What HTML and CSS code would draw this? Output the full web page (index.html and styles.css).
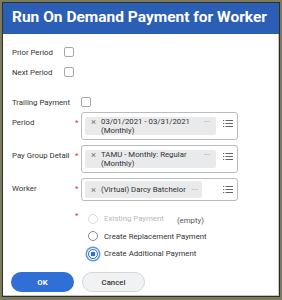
FILE: index.html
```html
<!DOCTYPE html>
<html>
<head>
    <link rel="stylesheet" href="styles.css">
</head>
<body>
    <div class="window">
        <div class="title">Run On Demand Payment for Worker</div>
        <div class="content">
            <div class="row short">
                <label>Prior Period</label>
                <span class="checkbox"></span>
            </div>
            <div class="row short">
                <label>Next Period</label>
                <span class="checkbox"></span>
            </div>
            <div class="row check">
                <label>Trailing Payment</label>
                <span></span>
                <span class="checkbox"></span>
            </div>

            <div class="row field first">
                <label>Period</label>
                <span class="req">*</span>
                <div class="box">
                    <div class="chip">
                        <span class="x">&times;</span>
                        <span class="text">03/01/2021 - 03/31/2021 (Monthly)</span>
                        <span class="dots">&middot;&middot;&middot;</span>
                    </div>
                    <svg class="list-icon" width="10" height="7" viewBox="0 0 10 7">
                        <rect x="0" y="0" width="1.2" height="1" />
                        <rect x="2.5" y="0" width="7.5" height="1" />
                        <rect x="0" y="3" width="1.2" height="1" />
                        <rect x="2.5" y="3" width="7.5" height="1" />
                        <rect x="0" y="6" width="1.2" height="1" />
                        <rect x="2.5" y="6" width="7.5" height="1" />
                    </svg>
                </div>
            </div>
            <div class="row field">
                <label>Pay Group Detail</label>
                <span class="req">*</span>
                <div class="box">
                    <div class="chip">
                        <span class="x">&times;</span>
                        <span class="text">TAMU - Monthly: Regular (Monthly)</span>
                        <span class="dots">&middot;&middot;&middot;</span>
                    </div>
                    <svg class="list-icon" width="10" height="7" viewBox="0 0 10 7">
                        <rect x="0" y="0" width="1.2" height="1" />
                        <rect x="2.5" y="0" width="7.5" height="1" />
                        <rect x="0" y="3" width="1.2" height="1" />
                        <rect x="2.5" y="3" width="7.5" height="1" />
                        <rect x="0" y="6" width="1.2" height="1" />
                        <rect x="2.5" y="6" width="7.5" height="1" />
                    </svg>
                </div>
            </div>
            <div class="row field">
                <label>Worker</label>
                <span class="req">*</span>
                <div class="box single">
                    <div class="chip">
                        <span class="x">&times;</span>
                        <span class="text">(Virtual) Darcy Batchelor</span>
                        <span class="dots">&middot;&middot;&middot;</span>
                    </div>
                    <svg class="list-icon" width="10" height="7" viewBox="0 0 10 7">
                        <rect x="0" y="0" width="1.2" height="1" />
                        <rect x="2.5" y="0" width="7.5" height="1" />
                        <rect x="0" y="3" width="1.2" height="1" />
                        <rect x="2.5" y="3" width="7.5" height="1" />
                        <rect x="0" y="6" width="1.2" height="1" />
                        <rect x="2.5" y="6" width="7.5" height="1" />
                    </svg>
                </div>
            </div>

            <div class="row radios">
                <span></span>
                <span class="req">*</span>
                <div class="radio-list">
                    <div class="radio-item disabled">
                        <span class="radio"></span>
                        <span>Existing Payment</span>
                        <span class="empty">(empty)</span>
                    </div>
                    <div class="radio-item">
                        <span class="radio"></span>
                        <span>Create Replacement Payment</span>
                    </div>
                    <div class="radio-item">
                        <span class="radio selected"></span>
                        <span>Create Additional Payment</span>
                    </div>
                </div>
            </div>

            <div class="actions">
                <button class="btn-ok">OK</button>
                <button class="btn-cancel">Cancel</button>
            </div>
        </div>
    </div>
</body>
</html>
```

FILE: styles.css
```css
body {
    margin: 0;
    padding: 2px 2px 3px 2px;
    background-color: #7c7c5c;
    font-family: Roboto, "Liberation Sans", sans-serif;
}

.window {
    box-sizing: border-box;
    height: 295px;
    background-color: #fff;
    border: 1px solid #2e2e2e;
    box-shadow: inset -1px -1px 0 #c4c4c4;
}

.title {
    background-color: #2b5eb5;
    color: #fff;
    font-size: 15.5px;
    font-weight: bold;
    line-height: 20px;
    padding: 4px 9px 7px 9px;
    white-space: nowrap;
}

.content {
    padding: 8px 0 0 9px;
    font-size: 7.8px;
    color: #333;
}

.row {
    display: grid;
    grid-template-columns: 61px 8px 157px;
}

.row label {
    line-height: 9px;
}

.row.short {
    grid-template-columns: 52px 10px;
    height: 20px;
    align-items: center;
}

.row.check {
    margin-top: 11px;
    height: 18px;
    align-items: center;
}

.checkbox {
    display: block;
    box-sizing: border-box;
    width: 10px;
    height: 10px;
    border: 1px solid #a8a8a8;
    border-radius: 2px;
}

.req {
    color: #d6322d;
    font-size: 8px;
    line-height: 9px;
    padding-left: 2px;
}

.row.field {
    margin-top: 5px;
}

.row.field.first {
    margin-top: 1px;
}

.row.field label,
.row.field .req {
    padding-top: 6px;
}

.box {
    display: flex;
    align-items: flex-start;
    border: 1px solid #bcbcbc;
    border-radius: 3px;
    padding: 4px 4px 4px 3px;
}

.box.single {
    align-items: center;
    padding: 2px 4px 2px 3px;
}

.chip {
    flex: 1;
    display: flex;
    align-items: flex-start;
    background-color: #e9eaec;
    border-radius: 2px;
    padding: 0 6px;
    line-height: 9px;
}

.box.single .chip {
    flex: none;
    padding: 4px 4px 4px 6px;
}

.chip .x {
    color: #777;
    font-size: 9.5px;
    width: 5px;
    margin-right: 5px;
}

.chip .text {
    flex: 1;
    color: #333;
}

.chip .dots {
    color: #888;
    font-size: 8px;
    margin-left: 6px;
}

.list-icon {
    fill: #666;
    margin-left: auto;
    margin-top: 3px;
    padding-left: 7px;
}

.box.single .list-icon {
    margin-top: 0;
}

.row.radios {
    margin-top: 9px;
}

.row.radios .req {
    padding-top: 1px;
}

.radio-list {
    padding-left: 7px;
}

.radio-item {
    display: flex;
    align-items: center;
    height: 17.5px;
}

.radio {
    box-sizing: border-box;
    width: 10px;
    height: 10px;
    border: 1px solid #8a8a8a;
    border-radius: 50%;
    margin-right: 6px;
    background-color: #fff;
}

.radio.selected {
    border: 1.5px solid #2f6fd6;
    background: radial-gradient(circle, #2f6fd6 0, #2f6fd6 2.2px, #fff 2.6px);
    box-shadow: 0 0 0 1px #fff, 0 0 0 2.5px #5f95e2;
}

.radio-item.disabled {
    color: #b8b8b8;
}

.radio-item.disabled .radio {
    border-color: #dddddd;
}

.empty {
    color: #555;
    margin-left: 13px;
    padding-top: 4px;
}

.actions {
    display: flex;
    gap: 8px;
    margin-top: 9.5px;
    margin-left: -1px;
}

.actions button {
    width: 63px;
    height: 20px;
    border-radius: 10px;
    font-family: Roboto, "Liberation Sans", sans-serif;
    font-size: 7.8px;
    cursor: pointer;
}

.btn-ok {
    background-color: #2f6fd6;
    color: #fff;
    font-weight: bold;
    border: none;
}

.btn-cancel {
    background-color: #f1f2f3;
    color: #333;
    font-weight: 500;
    border: 1px solid #d4d6d8;
}
```
